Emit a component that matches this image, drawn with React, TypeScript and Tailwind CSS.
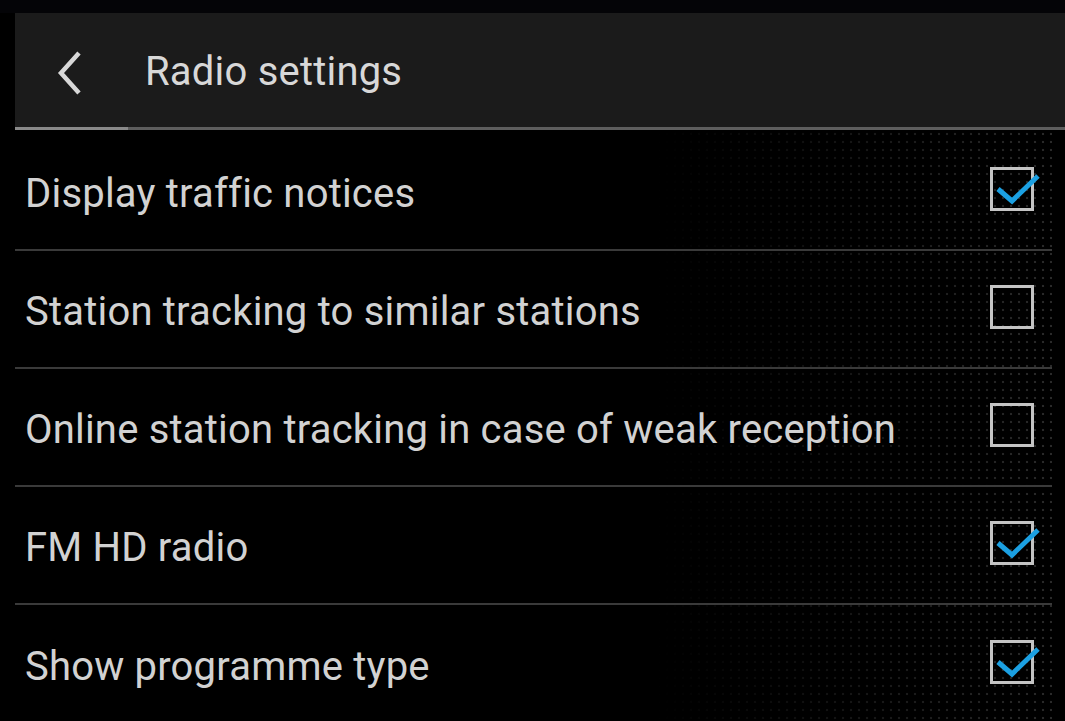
const rows = [
  { label: "Display traffic notices", checked: true },
  { label: "Station tracking to similar stations", checked: false },
  { label: "Online station tracking in case of weak reception", checked: false },
  { label: "FM HD radio", checked: true },
  { label: "Show programme type", checked: true },
];

function Checkbox({ checked }: { checked: boolean }) {
  return (
    <div className="relative w-[44px] h-[44px] border-[3px] border-[#c4c4c4] shrink-0">
      {checked && (
        <svg
          className="absolute left-[-3px] top-[-3px] overflow-visible"
          width="52"
          height="44"
          viewBox="0 0 52 44"
        >
          <path d="M8 22 L22 34 L48 9" fill="none" stroke="#1ba0e2" strokeWidth="5" strokeLinejoin="miter" />
        </svg>
      )}
    </div>
  );
}

export default function App() {
  return (
    <div
      className="w-[1065px] h-[721px] overflow-hidden bg-black text-[#d2d2d2]"
      style={{ fontFamily: "Roboto, 'Noto Sans', sans-serif" }}
    >
      <div className="h-[13px] bg-[#040407]" />
      <div className="pl-[15px]">
        <div className="h-[114px] bg-[#1b1b1b] flex items-center">
          <svg width="40" height="50" viewBox="0 0 40 50" className="ml-[40px] mt-[1px]">
            <path d="M24 7 L6 27 L24 47" fill="none" stroke="#d8d8d8" strokeWidth="4.5" />
          </svg>
          <span className="ml-[50px] mt-[4px] text-[40px] leading-none tracking-[0.2px] text-[#d8d8d8]">Radio settings</span>
        </div>
        <div className="h-[3px] flex">
          <div className="w-[113px] bg-[#8a8a8a]" />
          <div className="flex-1 bg-[#5e5e5e]" />
        </div>
        <div className="mr-[13px] pt-[3px] bg-[linear-gradient(to_right,#000_62%,transparent),radial-gradient(circle,#2a2a2a_1px,transparent_1.6px)] bg-[length:100%_100%,8px_8px]">
          {rows.map((r, i) => (
            <div
              key={i}
              className={`h-[118px] flex items-center justify-between pl-[10px] pr-[18px] ${i < rows.length - 1 ? "border-b-2 border-[#3a3a3a]" : ""}`}
            >
              <span className="text-[40px] leading-none tracking-[0.2px] mt-[5px]">{r.label}</span>
              <div className="mb-[4px]">
                <Checkbox checked={r.checked} />
              </div>
            </div>
          ))}
        </div>
      </div>
    </div>
  );
}
